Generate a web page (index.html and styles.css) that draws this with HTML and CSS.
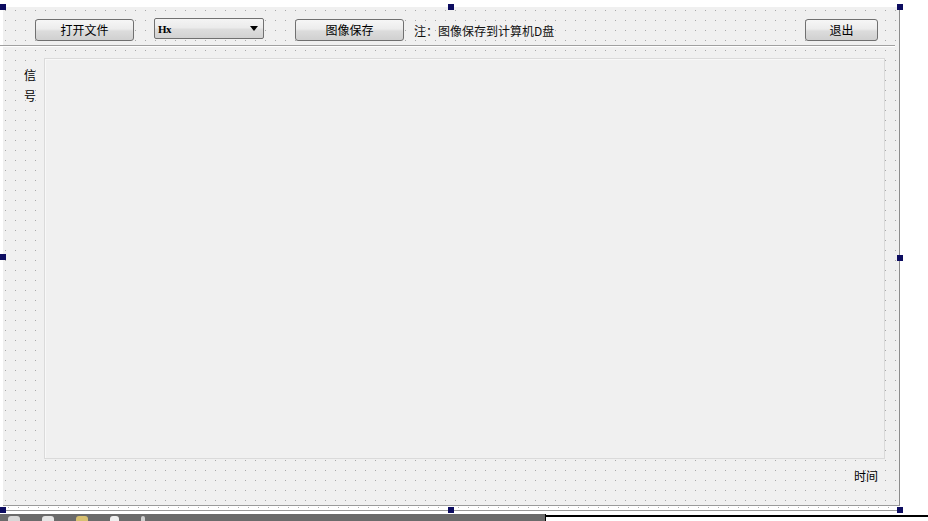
FILE: index.html
```html
<!DOCTYPE html>
<html>
<head>
<meta charset="utf-8">
<link rel="stylesheet" href="styles.css">
</head>
<body>
<div class="screen">
  <div class="top-strip"></div>
  <div class="form-row">
    <div class="form">
      <div class="toolbar">
        <button class="btn btn-open">打开文件</button>
        <div class="combo"><span class="combo-text">Hx</span><span class="combo-arrow"></span></div>
        <button class="btn btn-save">图像保存</button>
        <span class="note">注：图像保存到计算机D盘</span>
        <button class="btn btn-exit">退出</button>
      </div>
      <div class="hline"></div>
      <div class="main">
        <div class="ylabel">信号</div>
        <div class="plot"></div>
      </div>
      <div class="xrow"><span class="xlabel">时间</span></div>
    </div>
  </div>
  <div class="bottom-gap"></div>
  <div class="taskbar">
    <div class="task-left">
      <span class="ti ti1"></span><span class="ti ti2"></span><span class="ti ti3"></span><span class="ti ti4"></span><span class="ti ti5"></span>
    </div>
    <div class="task-right"></div>
  </div>
  <span class="handle h-tl"></span>
  <span class="handle h-tm"></span>
  <span class="handle h-tr"></span>
  <span class="handle h-ml"></span>
  <span class="handle h-mr"></span>
  <span class="handle h-bl"></span>
  <span class="handle h-bm"></span>
  <span class="handle h-br"></span>
</div>
</body>
</html>
```
FILE: styles.css
```css
html, body {
  margin: 0;
  padding: 0;
  background: #ffffff;
}
body {
  font-family: "Noto Sans CJK SC", "Liberation Sans", sans-serif;
  font-size: 12px;
  color: #000;
}
.screen {
  position: relative;
  width: 928px;
  height: 521px;
  overflow: hidden;
  display: flex;
  flex-direction: column;
}
.top-strip {
  height: 7px;
  flex: none;
}
.form-row {
  display: flex;
  padding-left: 3px;
  flex: none;
}
.form {
  width: 896px;
  height: 498px;
  background-color: #f0f0f0;
  background-image: radial-gradient(circle at 0.5px 0.5px, #a8a8a8 0.6px, transparent 0.9px);
  background-size: 10px 10px;
  background-position: 2px 3px;
  border-right: 1px solid #8c8c8c;
  border-bottom: 1px solid #9a9a9a;
  display: flex;
  flex-direction: column;
}
.toolbar {
  display: flex;
  align-items: flex-start;
  height: 22px;
  margin-top: 11px;
  padding-left: 32px;
  padding-right: 21px;
}
.btn {
  height: 22px;
  margin: 1px 0 0 0;
  padding: 0;
  border: 1px solid #707070;
  border-radius: 3px;
  background: linear-gradient(to bottom, #f6f6f6 0%, #ececec 45%, #dcdcdc 55%, #d0d0d0 100%);
  font-family: "Noto Sans CJK SC", sans-serif;
  font-size: 12px;
  line-height: 18px;
  color: #000;
  box-sizing: border-box;
}
.btn-open { width: 99px; }
.btn-save { width: 109px; margin-left: 31px; }
.btn-exit { width: 73px; margin-left: auto; }
.combo {
  width: 110px;
  height: 21px;
  margin-left: 20px;
  box-sizing: border-box;
  border: 1px solid #707070;
  border-radius: 2px;
  background: linear-gradient(to bottom, #f4f4f4 0%, #ebebeb 45%, #dddddd 55%, #d2d2d2 100%);
  display: flex;
  align-items: center;
  padding-left: 3px;
  padding-right: 5px;
}
.combo-text {
  font-family: "Liberation Serif", serif;
  font-size: 11px;
  font-weight: bold;
  letter-spacing: -0.5px;
  flex: 1;
}
.combo-arrow {
  width: 0;
  height: 0;
  border-left: 4px solid transparent;
  border-right: 4px solid transparent;
  border-top: 5px solid #000;
}
.note {
  margin-left: 10px;
  margin-top: 4px;
  line-height: 18px;
  color: #111;
}
.hline {
  height: 1px;
  border-top: 1px solid #a0a0a0;
  background: #fff;
  width: 895px;
  margin-top: 5px;
  margin-left: -3px;
  flex: none;
}
.main {
  display: flex;
  margin-top: 11px;
  height: 401px;
}
.ylabel {
  width: 13px;
  margin-left: 21px;
  margin-right: 7px;
  margin-top: 6px;
  line-height: 21px;
  font-size: 12px;
  word-break: break-all;
}
.plot {
  width: 841px;
  height: 401px;
  box-sizing: border-box;
  background: #f0f0f0;
  border: 1px solid #dadada;
  box-shadow: inset 1px 1px 0 #f8f8f8;
}
.xrow {
  display: flex;
  justify-content: flex-end;
  padding-right: 21px;
  margin-top: 8px;
}
.xlabel {
  line-height: 18px;
}
.bottom-gap {
  height: 4px;
  flex: none;
  background-image: radial-gradient(circle at 0.5px 0.5px, #b0b0b0 0.6px, transparent 0.9px);
  background-size: 10px 10px;
  background-position: 5px 1px;
  background-repeat: repeat-x;
  border-bottom: 1px solid #9a9a9a;
  width: 896px;
  margin-left: 3px;
}
.taskbar {
  margin-top: 3px;
  flex: 1;
  display: flex;
}
.task-left {
  width: 546px;
  background: #6b6b6b;
  border-right: 1px solid #000;
  display: flex;
  align-items: flex-end;
  gap: 22px;
  padding-left: 8px;
  box-sizing: border-box;
}
.ti {
  width: 12px;
  height: 5px;
  background: #d8d8d8;
  border-radius: 3px 3px 0 0;
}
.ti2 { background: #e6e6e6; }
.ti3 { background: #d8c070; }
.ti4 { background: #f0f0f0; width: 9px; }
.ti5 { background: #cfcfcf; width: 4px; }
.task-right {
  flex: 1;
  background: #fff;
  border-top: 2px solid #000;
  margin-top: 1px;
}
.handle {
  position: absolute;
  width: 6px;
  height: 6px;
  background: #0c0c60;
}
.h-tl { left: 0; top: 4px; }
.h-tm { left: 448px; top: 4px; }
.h-tr { left: 897px; top: 4px; }
.h-ml { left: 0; top: 254px; }
.h-mr { left: 897px; top: 255px; }
.h-bl { left: 0; top: 507px; }
.h-bm { left: 448px; top: 507px; }
.h-br { left: 897px; top: 507px; }
```
